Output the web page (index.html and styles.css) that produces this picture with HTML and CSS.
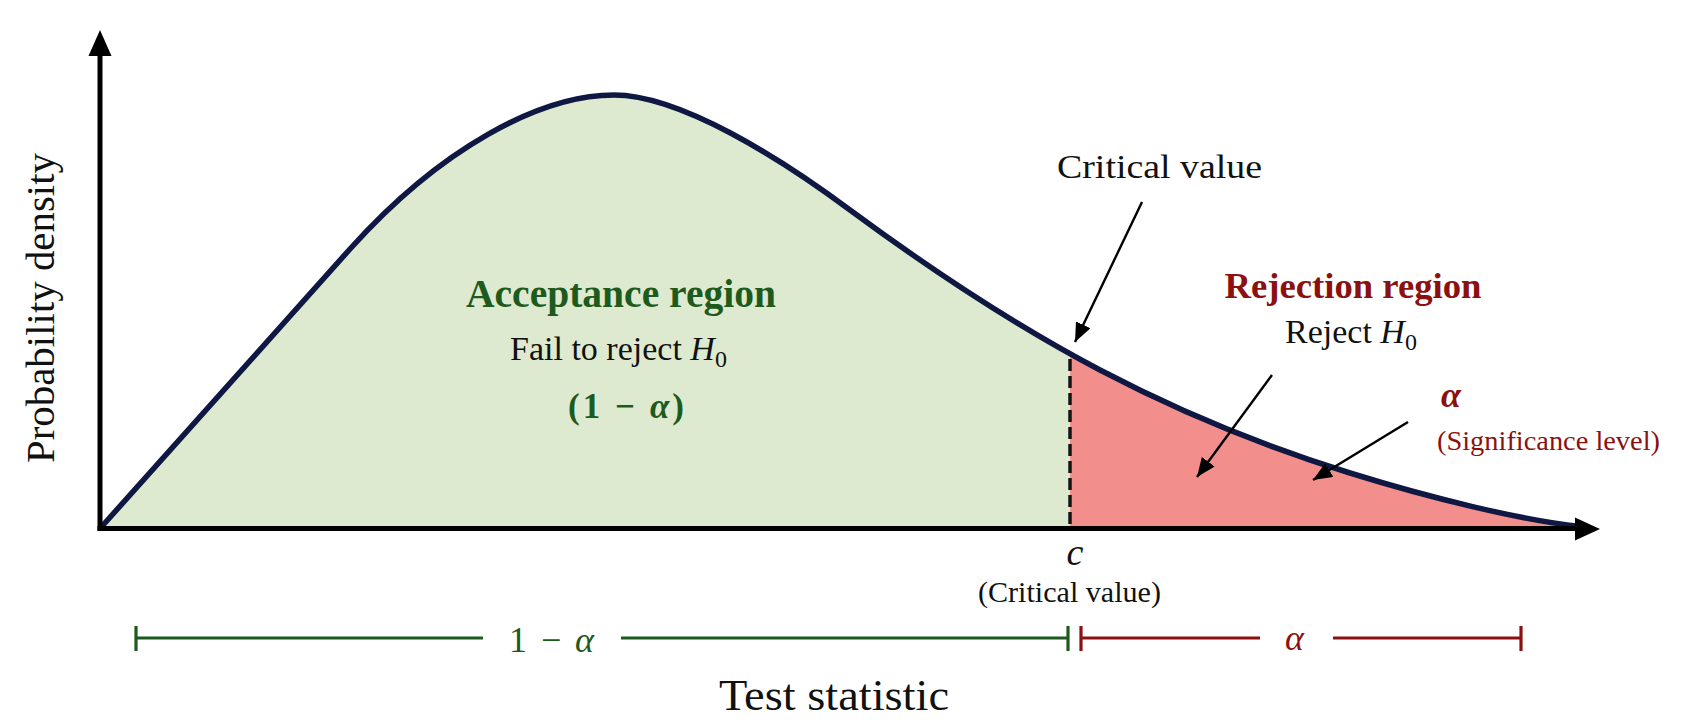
FILE: index.html
```html
<!DOCTYPE html>
<html lang="en">
<head>
<meta charset="utf-8">
<title>Hypothesis test: acceptance and rejection regions</title>
<link rel="stylesheet" href="styles.css">
</head>
<body>
<figure class="chart">
  <svg class="plot" viewBox="0 0 1690 724" width="1690" height="724" xmlns="http://www.w3.org/2000/svg">
    <defs>
      <clipPath id="clip-accept"><rect x="0" y="0" width="1070" height="724"/></clipPath>
      <clipPath id="clip-reject"><rect x="1070" y="0" width="620" height="724"/></clipPath>
      <marker id="pointer" markerUnits="userSpaceOnUse" markerWidth="20" markerHeight="16" refX="19" refY="8" orient="auto">
        <path class="pointer-head" d="M0,0 L19,8 L0,16 Z"/>
      </marker>
    </defs>

    <!-- filled regions -->
    <path class="area-accept" clip-path="url(#clip-accept)" d="M100,528.5 L350,249 C440,148.5 540,95 614,95 C680,95 780,158 850,210 C930,269 1020,328 1100,370 C1180,412 1270,448.2 1350,473 C1430,497.8 1520,520 1580,526.5 L1580,528.5 L100,528.5 Z"/>
    <path class="area-reject" clip-path="url(#clip-reject)" d="M100,528.5 L350,249 C440,148.5 540,95 614,95 C680,95 780,158 850,210 C930,269 1020,328 1100,370 C1180,412 1270,448.2 1350,473 C1430,497.8 1520,520 1580,526.5 L1580,528.5 L100,528.5 Z"/>

    <!-- critical value dashed line -->
    <line class="critical-line" x1="1070" y1="359" x2="1070" y2="526"/>

    <!-- density curve -->
    <path class="curve" d="M100,528.5 L350,249 C440,148.5 540,95 614,95 C680,95 780,158 850,210 C930,269 1020,328 1100,370 C1180,412 1270,448.2 1350,473 C1430,497.8 1520,520 1580,526.5"/>

    <!-- axes -->
    <line class="axis" x1="100" y1="531" x2="100" y2="52"/>
    <polygon class="axis-head" points="100,30 88.5,56 111.5,56"/>
    <line class="axis" x1="97.5" y1="528.5" x2="1578" y2="528.5"/>
    <polygon class="axis-head" points="1600,529 1575,517.5 1575,540.5"/>

    <!-- pointers -->
    <line class="pointer" x1="1142" y1="202" x2="1075" y2="342" marker-end="url(#pointer)"/>
    <line class="pointer" x1="1272" y1="375" x2="1197" y2="477" marker-end="url(#pointer)"/>
    <line class="pointer" x1="1408" y1="422" x2="1313" y2="480" marker-end="url(#pointer)"/>

    <!-- axis titles -->
    <text class="serif axis-title" transform="translate(54,308) rotate(-90)" text-anchor="middle" textLength="310" lengthAdjust="spacingAndGlyphs">Probability density</text>
    <text class="serif axis-title axis-title-x" x="834" y="710" text-anchor="middle" textLength="230" lengthAdjust="spacingAndGlyphs">Test statistic</text>

    <!-- acceptance region labels -->
    <text class="serif heading green" x="621" y="307" text-anchor="middle" textLength="310" lengthAdjust="spacingAndGlyphs">Acceptance region</text>
    <text class="serif body-text" x="510" y="360">Fail to reject <tspan class="math-it">H</tspan><tspan class="sub" dy="7">0</tspan></text>
    <text class="serif math-bold green" x="626" y="418" text-anchor="middle" textLength="116" lengthAdjust="spacing">(1 − <tspan class="math-it">α</tspan>)</text>

    <!-- critical value labels -->
    <text class="serif body-text" x="1057" y="178" textLength="205" lengthAdjust="spacingAndGlyphs">Critical value</text>
    <text class="serif math-it c-label" x="1075" y="565" text-anchor="middle">c</text>
    <text class="serif small-text" x="978" y="602" textLength="183" lengthAdjust="spacingAndGlyphs">(Critical value)</text>

    <!-- rejection region labels -->
    <text class="serif heading-r red" x="1353" y="298" text-anchor="middle" textLength="257" lengthAdjust="spacingAndGlyphs">Rejection region</text>
    <text class="serif body-text" x="1285" y="343">Reject <tspan class="math-it">H</tspan><tspan class="sub" dy="7">0</tspan></text>
    <text class="serif math-bold-it red" x="1441" y="407">α</text>
    <text class="serif sig-text red" x="1437" y="450" textLength="223" lengthAdjust="spacingAndGlyphs">(Significance level)</text>

    <!-- proportion bars -->
    <g class="bar bar-green">
      <line x1="136" y1="626" x2="136" y2="651"/>
      <line x1="136" y1="638" x2="483" y2="638"/>
      <line x1="621" y1="638" x2="1068" y2="638"/>
      <line x1="1068" y1="626" x2="1068" y2="651"/>
    </g>
    <text class="serif bar-label green" x="509" y="652" textLength="85" lengthAdjust="spacing">1 − <tspan class="math-it">α</tspan></text>

    <g class="bar bar-red">
      <line x1="1081" y1="626" x2="1081" y2="651"/>
      <line x1="1081" y1="638" x2="1260" y2="638"/>
      <line x1="1333" y1="638" x2="1521" y2="638"/>
      <line x1="1521" y1="626" x2="1521" y2="651"/>
    </g>
    <text class="serif bar-label math-it red" x="1285" y="650">α</text>
  </svg>
</figure>
</body>
</html>
```

FILE: styles.css
```css
html, body {
  margin: 0;
  padding: 0;
  background: #ffffff;
}

.chart {
  margin: 0;
  width: 1690px;
  height: 724px;
  overflow: hidden;
}

.plot {
  display: block;
}

.area-accept {
  fill: #ddeacf;
  stroke: none;
}

.area-reject {
  fill: #f28f8c;
  stroke: none;
}

.curve {
  fill: none;
  stroke: #0f1842;
  stroke-width: 5.5;
  stroke-linejoin: round;
}

.critical-line {
  stroke: #141414;
  stroke-width: 3.5;
  stroke-dasharray: 12 5;
}

.axis {
  stroke: #000000;
  stroke-width: 5;
}

.axis-head {
  fill: #000000;
}

.pointer {
  stroke: #000000;
  stroke-width: 2.4;
}

.pointer-head {
  fill: #000000;
}

.serif {
  font-family: "Liberation Serif", "Times New Roman", serif;
  fill: #111111;
}

.axis-title {
  font-size: 39px;
}

.axis-title-x {
  font-size: 45px;
}

.heading {
  font-size: 39px;
  font-weight: 700;
}

.heading-r {
  font-size: 36px;
  font-weight: 700;
}

.body-text {
  font-size: 34px;
}

.small-text {
  font-size: 30px;
}

.sig-text {
  font-size: 28px;
}

.math-it {
  font-style: italic;
}

.math-bold {
  font-size: 35px;
  font-weight: 700;
}

.math-bold-it {
  font-size: 36px;
  font-weight: 700;
  font-style: italic;
}

.c-label {
  font-size: 38px;
  fill: #111111;
}

.sub {
  font-size: 24px;
  font-style: normal;
}

.bar-label {
  font-size: 36px;
}

.bar line {
  stroke-width: 3.2;
}

.bar-green line {
  stroke: #1d5a1d;
}

.bar-red line {
  stroke: #8b1111;
}

.green {
  fill: #1d5a1d;
}

.red {
  fill: #8b1111;
}
```
